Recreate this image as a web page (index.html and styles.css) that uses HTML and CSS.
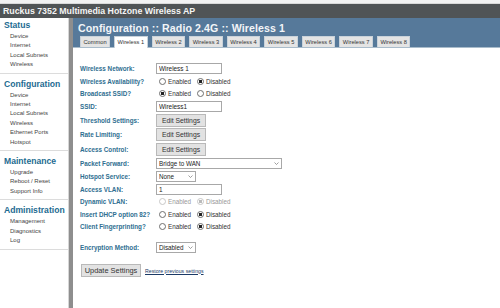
FILE: index.html
```html
<!DOCTYPE html>
<html lang="en">
<head>
  <meta charset="UTF-8">
  <title>Ruckus 7352 Multimedia Hotzone Wireless AP</title>
  <link rel="stylesheet" href="styles.css">
</head>
<body>

  <div class="topstrip"></div>
  <div class="titlebar">Ruckus 7352 Multimedia Hotzone Wireless AP</div>

  <div class="page">
    <div class="sidebar">
      <div class="nav-section first">
        <div class="nav-title">Status</div>
        <a class="nav-item">Device</a>
        <a class="nav-item">Internet</a>
        <a class="nav-item">Local Subnets</a>
        <a class="nav-item">Wireless</a>
      </div>
      <div class="nav-section">
        <div class="nav-title">Configuration</div>
        <a class="nav-item">Device</a>
        <a class="nav-item">Internet</a>
        <a class="nav-item">Local Subnets</a>
        <a class="nav-item">Wireless</a>
        <a class="nav-item">Ethernet Ports</a>
        <a class="nav-item">Hotspot</a>
      </div>
      <div class="nav-section">
        <div class="nav-title">Maintenance</div>
        <a class="nav-item">Upgrade</a>
        <a class="nav-item">Reboot / Reset</a>
        <a class="nav-item">Support Info</a>
      </div>
      <div class="nav-section">
        <div class="nav-title">Administration</div>
        <a class="nav-item">Management</a>
        <a class="nav-item">Diagnostics</a>
        <a class="nav-item">Log</a>
      </div>
    </div>
    <div class="rail"></div>

    <div class="content">
      <div class="header">
        <h1>Configuration :: Radio 2.4G :: Wireless 1</h1>
        <div class="tabs">
          <span class="tab">Common</span>
          <span class="tab active">Wireless 1</span>
          <span class="tab">Wireless 2</span>
          <span class="tab">Wireless 3</span>
          <span class="tab">Wireless 4</span>
          <span class="tab">Wireless 5</span>
          <span class="tab">Wireless 6</span>
          <span class="tab">Wireless 7</span>
          <span class="tab">Wireless 8</span>
        </div>
      </div>

      <form class="settings">
        <div class="row">
          <label>Wireless Network:</label>
          <input class="text" type="text" value="Wireless 1">
        </div>
        <div class="row radio-row">
          <label>Wireless Availability?</label>
          <span class="opt"><input type="radio" name="avail">Enabled</span>
          <span class="opt"><input type="radio" name="avail" checked>Disabled</span>
        </div>
        <div class="row radio-row">
          <label>Broadcast SSID?</label>
          <span class="opt"><input type="radio" name="bcast" checked>Enabled</span>
          <span class="opt"><input type="radio" name="bcast">Disabled</span>
        </div>
        <div class="row">
          <label>SSID:</label>
          <input class="text" type="text" value="Wireless1">
        </div>
        <div class="row btn-row">
          <label>Threshold Settings:</label>
          <button type="button" class="edit-btn">Edit Settings</button>
        </div>
        <div class="row btn-row">
          <label>Rate Limiting:</label>
          <button type="button" class="edit-btn">Edit Settings</button>
        </div>
        <div class="row btn-row">
          <label>Access Control:</label>
          <button type="button" class="edit-btn">Edit Settings</button>
        </div>
        <div class="row">
          <label>Packet Forward:</label>
          <span class="select wide">
            <select><option>Bridge to WAN</option></select>
            <svg class="chevron" width="5" height="3" viewBox="0 0 5 3"><path d="M0.5 0.5 L2.5 2.5 L4.5 0.5" fill="none" stroke="#777" stroke-width="0.7"/></svg>
          </span>
        </div>
        <div class="row">
          <label>Hotspot Service:</label>
          <span class="select short">
            <select><option>None</option></select>
            <svg class="chevron" width="5" height="3" viewBox="0 0 5 3"><path d="M0.5 0.5 L2.5 2.5 L4.5 0.5" fill="none" stroke="#777" stroke-width="0.7"/></svg>
          </span>
        </div>
        <div class="row">
          <label>Access VLAN:</label>
          <input class="text" type="text" value="1">
        </div>
        <div class="row radio-row">
          <label>Dynamic VLAN:</label>
          <span class="opt off"><input type="radio" name="dvlan" disabled>Enabled</span>
          <span class="opt off"><input type="radio" name="dvlan" checked disabled>Disabled</span>
        </div>
        <div class="row radio-row">
          <label>Insert DHCP option 82?</label>
          <span class="opt"><input type="radio" name="dhcp">Enabled</span>
          <span class="opt"><input type="radio" name="dhcp" checked>Disabled</span>
        </div>
        <div class="row radio-row">
          <label>Client Fingerprinting?</label>
          <span class="opt"><input type="radio" name="fp">Enabled</span>
          <span class="opt"><input type="radio" name="fp" checked>Disabled</span>
        </div>

        <div class="row spaced">
          <label>Encryption Method:</label>
          <span class="select short">
            <select><option>Disabled</option></select>
            <svg class="chevron" width="5" height="3" viewBox="0 0 5 3"><path d="M0.5 0.5 L2.5 2.5 L4.5 0.5" fill="none" stroke="#777" stroke-width="0.7"/></svg>
          </span>
        </div>

        <div class="actions">
          <button type="button" class="update-btn">Update Settings</button>
          <a class="restore" href="#">Restore previous settings</a>
        </div>
      </form>
    </div>
  </div>

</body>
</html>
```

FILE: styles.css
```css
body {
  margin: 0;
  padding: 0;
  font-family: 'Liberation Sans', Arial, sans-serif;
  background: #fff;
  color: #333;
}

.topstrip {
  height: 3px;
  background: #f2f2f2;
  border-bottom: 1px solid #d9d9d9;
}

.titlebar {
  height: 14px;
  line-height: 14px;
  padding-left: 3px;
  background-color: #505456;
  color: #f4f4f4;
  font-size: 8.8px;
  font-weight: bold;
}

.page {
  display: flex;
  min-height: calc(100vh - 18px);
}

/* left menu */
.sidebar {
  width: 68px;
  border-right: 1px solid #d6d6d6;
  background: #fff;
}

.rail {
  width: 4px;
  background-color: #8e8e8e;
}

.nav-section {
  padding: 4px 0 3px;
  border-bottom: 1px solid #dcdcdc;
}

.nav-section.first {
  padding-top: 1px;
}

.nav-title {
  padding-left: 4px;
  line-height: 13px;
  font-size: 8.6px;
  font-weight: bold;
  color: #1d6b91;
}

.nav-item {
  display: block;
  padding-left: 10px;
  line-height: 9.4px;
  font-size: 6px;
  color: #444;
}

/* main area */
.content {
  flex: 1;
}

.header {
  height: 29px;
  background-color: #56799a;
  border-bottom: 1px solid #a9bccb;
  display: flex;
  flex-direction: column;
}

.header h1 {
  margin: 0;
  padding: 3px 0 0 5px;
  line-height: 15px;
  font-size: 10.6px;
  font-weight: bold;
  color: #f2f5f8;
  letter-spacing: 0.1px;
}

.tabs {
  display: flex;
  gap: 4px;
  margin-top: auto;
  padding-left: 7px;
}

.tab {
  height: 10px;
  line-height: 10px;
  padding: 0 2.5px;
  font-size: 5.7px;
  color: #333;
  background-color: #e4e4e4;
  border: 1px solid #c9d2da;
  border-bottom: none;
}

.tab.active {
  background-color: #fff;
  height: 11px;
  margin-bottom: -1px;
}

.settings {
  padding: 14px 0 0 7px;
}

.row {
  display: flex;
  align-items: center;
  height: 13px;
}

.radio-row {
  height: 12.5px;
}

.btn-row {
  height: 14.5px;
}

.row.spaced {
  margin-top: 8px;
}

.row label {
  width: 76px;
  flex-shrink: 0;
  font-size: 6.3px;
  font-weight: bold;
  color: #2e6e90;
}

.text {
  box-sizing: border-box;
  width: 66px;
  height: 11px;
  padding: 0 2px;
  border: 1px solid #a8a8a8;
  font-family: 'Liberation Sans', Arial, sans-serif;
  font-size: 6.4px;
  color: #222;
}

.opt {
  display: inline-flex;
  align-items: center;
  width: 38px;
  font-size: 6.3px;
  color: #333;
}

.opt:first-of-type {
  margin-left: 3px;
}

.opt input {
  appearance: none;
  box-sizing: border-box;
  width: 7px;
  height: 7px;
  margin: 0 2px 0 0;
  border: 1px solid #6f6f6f;
  border-radius: 50%;
  background: #fff;
}

.opt input:checked {
  background: radial-gradient(circle, #222 0, #222 1.6px, #fff 2px);
}

.opt.off {
  color: #999;
}

.opt.off input {
  border-color: #c8c8c8;
}

.opt.off input:checked {
  background: radial-gradient(circle, #bbb 0, #bbb 1.6px, #fff 2px);
}

.edit-btn {
  width: 50px;
  height: 13px;
  padding: 0;
  font-family: 'Liberation Sans', Arial, sans-serif;
  font-size: 6.8px;
  color: #333;
  background-color: #e2e2e2;
  border: 1px solid #b9b9b9;
}

.select {
  position: relative;
  display: flex;
  height: 11px;
}

.select select {
  display: block;
  appearance: none;
  box-sizing: border-box;
  width: 100%;
  height: 11px;
  padding: 0 8px 0 2px;
  font-family: 'Liberation Sans', Arial, sans-serif;
  font-size: 6.3px;
  line-height: 9px;
  color: #222;
  background-color: #fff;
  border: 1px solid #a8a8a8;
  border-radius: 0;
}

.chevron {
  position: absolute;
  right: 3px;
  top: 4px;
}

.select.wide {
  width: 126px;
}

.select.short {
  width: 40px;
}

.actions {
  display: flex;
  align-items: center;
  gap: 4px;
  margin-top: 10px;
  padding-left: 1px;
}

.update-btn {
  width: 60px;
  height: 13px;
  padding: 0;
  font-family: 'Liberation Sans', Arial, sans-serif;
  font-size: 7.4px;
  color: #333;
  background-color: #e2e2e2;
  border: 1px solid #b9b9b9;
}

.restore {
  font-size: 5.2px;
  color: #1b3a66;
  text-decoration: underline;
}
```
